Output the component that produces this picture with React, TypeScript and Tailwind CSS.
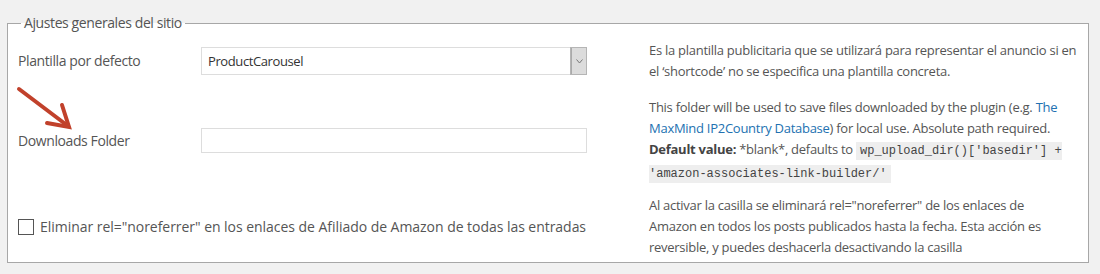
import React from 'react';

const Arrow: React.FC = () => (
  <svg
    className="absolute left-0 top-0 pointer-events-none"
    width="90"
    height="140"
    viewBox="0 0 90 140"
  >
    <g stroke="#c1412b" strokeWidth="4" strokeLinecap="round" fill="none">
      <line x1="19" y1="89" x2="68" y2="126" />
      <polyline points="47,123 69,127 62,105" strokeLinejoin="miter" />
    </g>
  </svg>
);

export default function App() {
  return (
    <div
      className="relative w-[1100px] h-[274px] overflow-hidden bg-[#f1f1f1] pl-[7px] pt-[13px] text-[#555] tracking-[-0.4px]"
      style={{ fontFamily: '"Open Sans", "Noto Sans", sans-serif' }}
    >
      <fieldset className="w-[1082px] border border-[#a7a7a7] bg-white pl-[10px] pr-[8px] pt-[7px] pb-[4px]">
        <legend className="ml-[3px] px-[3px] text-[14px] leading-[20px] text-[#555]">
          Ajustes generales del sitio
        </legend>

        <div className="grid grid-cols-[183px_386px_1fr] items-center gap-y-[14px]">
          {/* Plantilla */}
          <label className="text-[14px] leading-[20px]">Plantilla por defecto</label>
          <div className="flex h-[28px] border border-[#ddd] bg-white">
            <span className="flex-1 pl-[6px] text-[13px] leading-[26px] text-[#333]">ProductCarousel</span>
            <span className="flex w-[15px] items-center justify-center border-l border-[#aaa] bg-[#dcdcdc] outline outline-[#b5b5b5]">
              <svg width="7" height="5" viewBox="0 0 7 5">
                <polyline points="0.5,0.5 3.5,4 6.5,0.5" fill="none" stroke="#777" strokeWidth="1" />
              </svg>
            </span>
          </div>
          <p className="pl-[62px] text-[13px] leading-[21px] tracking-[-0.27px] whitespace-nowrap">
            Es la plantilla publicitaria que se utilizará para representar el anuncio si en
            <br />
            el ‘shortcode’ no se especifica una plantilla concreta.
          </p>

          {/* Downloads */}
          <label className="text-[14px] leading-[20px]">Downloads Folder</label>
          <input
            type="text"
            className="h-[25px] border border-[#ddd] bg-white px-[6px] text-[13px] outline-none"
          />
          <p className="pl-[62px] mt-[1px] text-[13px] leading-[21px] tracking-[-0.27px] whitespace-nowrap">
            This folder will be used to save files downloaded by the plugin (e.g.{' '}
            <a className="text-[#2271b1]">The</a>
            <br />
            <a className="text-[#2271b1]">MaxMind IP2Country Database</a>) for local use. Absolute path required.
            <br />
            <strong className="font-bold text-[#444]">Default value:</strong> *blank*, defaults to{' '}
            <code
              className="bg-[#eee] px-[4px] py-[2px] text-[12px] text-[#444] tracking-normal"
              style={{ fontFamily: '"Liberation Mono", "DejaVu Sans Mono", monospace' }}
            >
              wp_upload_dir()['basedir'] +
              <br />
              'amazon-associates-link-builder/'
            </code>
          </p>

          {/* Checkbox */}
          <label className="col-span-2 -mt-[4px] flex items-center gap-[6px] text-[14px] leading-[20px] tracking-[-0.04px] whitespace-nowrap">
            <span className="h-[16px] w-[16px] shrink-0 border border-[#555] bg-white" />
            Eliminar rel="noreferrer" en los enlaces de Afiliado de Amazon de todas las entradas
          </label>
          <p className="pl-[62px] -mt-[4px] text-[13px] leading-[21px] tracking-[-0.27px] whitespace-nowrap">
            Al activar la casilla se eliminará rel="noreferrer" de los enlaces de
            <br />
            Amazon en todos los posts publicados hasta la fecha. Esta acción es
            <br />
            reversible, y puedes deshacerla desactivando la casilla
          </p>
        </div>
      </fieldset>
      <Arrow />
    </div>
  );
}
